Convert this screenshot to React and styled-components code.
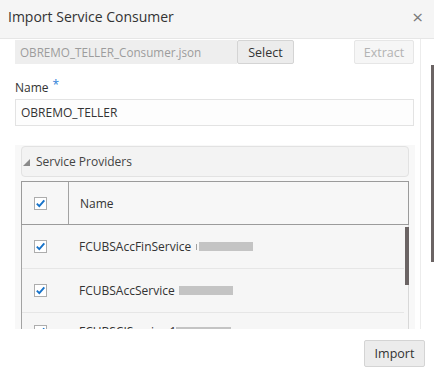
import styled, { createGlobalStyle } from "styled-components";

const GlobalStyle = createGlobalStyle`
  html, body {
    margin: 0;
    padding: 0;
    background: #ffffff;
  }
  body {
    font-family: "Segoe UI", "Open Sans", "Noto Sans", sans-serif;
    color: #333333;
  }
`;

const Dialog = styled.div`
  width: 434px;
  height: 381px;
  display: flex;
  flex-direction: column;
  background: #ffffff;
  overflow: hidden;
`;

const Header = styled.div`
  height: 39px;
  flex-shrink: 0;
  display: flex;
  align-items: flex-start;
  justify-content: space-between;
  padding: 6px 11px 0 8px;
  box-sizing: border-box;
  background: #f5f5f5;
  border-bottom: 1px solid #e6e6e6;
`;

const Title = styled.h1`
  margin: 0;
  font-size: 14px;
  font-weight: 400;
  line-height: 22px;
  color: #333333;
`;

const Close = styled.span`
  font-size: 19px;
  line-height: 22px;
  color: #7a7a7a;
`;

const Body = styled.div`
  height: 290px;
  flex-shrink: 0;
  display: flex;
`;

const Content = styled.div`
  width: 421px;
  box-sizing: border-box;
  padding: 1px 6px 0 15px;
  border-right: 1px solid #ececec;
  overflow: hidden;
`;

const ScrollTrack = styled.div`
  flex: 1;
  display: flex;
  justify-content: flex-end;
  padding-top: 26px;
`;

const Thumb = styled.div`
  width: 3px;
  height: ${(p) => p.$h}px;
  background: #6b6464;
`;

const FileRow = styled.div`
  display: flex;
  height: 24px;
`;

const FileInput = styled.div`
  width: 222px;
  padding-left: 5px;
  box-sizing: border-box;
  background: #eeeeee;
  color: #9c9c9c;
  font-size: 11.7px;
  line-height: 24px;
`;

const Button = styled.button`
  font-family: inherit;
  font-size: 12.5px;
  height: ${(p) => p.$h || 24}px;
  width: ${(p) => p.$w}px;
  padding: 0;
  border-radius: 2px;
  border: 1px solid ${(p) => (p.$disabled ? "#e6e6e6" : "#d4d4d4")};
  background: ${(p) => (p.$disabled ? "#f6f6f6" : "#ececec")};
  color: ${(p) => (p.$disabled ? "#b3b3b3" : "#333333")};
  margin-left: ${(p) => p.$ml || 0}px;
`;

const Label = styled.div`
  margin-top: 15px;
  font-size: 12px;
  line-height: 18px;
  color: #333333;
`;

const Required = styled.span`
  color: #2d7fd8;
  font-size: 12px;
  vertical-align: top;
  margin-left: 4px;
  line-height: 12px;
`;

const TextInput = styled.div`
  margin-top: 2px;
  height: 27px;
  box-sizing: border-box;
  border: 1px solid #e3e3e3;
  background: #fdfdfd;
  padding-left: 5px;
  font-size: 12px;
  line-height: 25px;
  color: #333333;
`;

const Panel = styled.div`
  margin-top: 19px;
  width: 400px;
  background: #f8f8f8;
  padding: 1px 6px 0;
  box-sizing: border-box;
  display: flex;
  flex-direction: column;
  gap: 4px;
`;

const PanelHeader = styled.div`
  height: 31px;
  box-sizing: border-box;
  border: 1px solid #e2e2e2;
  border-radius: 4px;
  background: #f3f3f3;
  display: flex;
  align-items: center;
  padding-left: 1px;
  gap: 6px;
  font-size: 12px;
  color: #444444;
`;

const Triangle = styled.span`
  width: 0;
  height: 0;
  border-left: 7px solid transparent;
  border-bottom: 7px solid #8a8a8a;
  margin-top: 1px;
`;

const Table = styled.div`
  position: relative;
  display: flex;
  flex-direction: column;
`;

const HeadRow = styled.div`
  display: flex;
  height: 44px;
  box-sizing: border-box;
  border: 1px solid #9b9b9b;
  background: #f7f7f7;
`;

const CheckCell = styled.div`
  width: ${(p) => (p.$head ? 47 : 46)}px;
  flex-shrink: 0;
  display: flex;
  align-items: center;
  padding-left: 12px;
  box-sizing: border-box;
  border-right: ${(p) => (p.$head ? "1px solid #a3a3a3" : "none")};
`;

const NameCell = styled.div`
  flex: 1;
  display: flex;
  align-items: center;
  padding-left: 11px;
  font-size: 12px;
  color: #333333;
`;

const Rows = styled.div`
  border-left: 1px solid #a3a3a3;
  border-right: 1px solid #d8d8d8;
  background: #f6f6f6;
`;

const Row = styled.div`
  display: flex;
  height: 44px;
  flex-shrink: 0;
  box-sizing: border-box;
  padding-bottom: ${(p) => p.$lift || 0}px;
  margin-right: 4px;
  border-bottom: 1px solid #e6e6e6;
`;

const Box = styled.span`
  width: 13px;
  height: 13px;
  box-sizing: border-box;
  border: 1px solid #adadad;
  background: #ffffff;
  display: flex;
  align-items: center;
  justify-content: center;
`;

const Redact = styled.span`
  display: inline-block;
  width: ${(p) => p.$w}px;
  height: 9px;
  background: #c4c4c4;
  margin-left: ${(p) => p.$ml}px;
`;

const Tick = styled.span`
  display: inline-block;
  width: 1px;
  height: 6px;
  background: #a0a0a0;
  margin-left: 5px;
`;

const TableThumb = styled.div`
  position: absolute;
  right: 0;
  top: 46px;
  width: 4px;
  height: 58px;
  background: #6b6464;
`;

const Footer = styled.div`
  flex: 1;
  display: flex;
  justify-content: flex-end;
  align-items: flex-start;
  padding: 11px 9px 0 0;
`;

function Check() {
  return (
    <Box>
      <svg width="11" height="11" viewBox="0 0 11 11">
        <path d="M1.8 5.6 L4.3 8.1 L9.3 2.4" fill="none" stroke="#1672c9" strokeWidth="1.9" />
      </svg>
    </Box>
  );
}

const services = [
  { name: "FCUBSAccFinService", tick: true, w: 54, ml: 2 },
  { name: "FCUBSAccService", w: 54, ml: 4 },
  { name: "FCUBSCIService 1", w: 55, ml: 0, lift: 7 },
];

export default function App() {
  return (
    <Dialog>
      <GlobalStyle />
      <Header>
        <Title>Import Service Consumer</Title>
        <Close>×</Close>
      </Header>
      <Body>
        <Content>
          <FileRow>
            <FileInput>OBREMO_TELLER_Consumer.json</FileInput>
            <Button $w={57}>Select</Button>
            <Button $w={60} $ml={60} $disabled>
              Extract
            </Button>
          </FileRow>
          <Label>
            Name<Required>*</Required>
          </Label>
          <TextInput>OBREMO_TELLER</TextInput>
          <Panel>
            <PanelHeader>
              <Triangle />
              Service Providers
            </PanelHeader>
            <Table>
              <HeadRow>
                <CheckCell $head>
                  <Check />
                </CheckCell>
                <NameCell>Name</NameCell>
              </HeadRow>
              <Rows>
                {services.map((s) => (
                  <Row key={s.name} $lift={s.lift}>
                    <CheckCell>
                      <Check />
                    </CheckCell>
                    <NameCell>
                      {s.name}
                      {s.tick && <Tick />}
                      <Redact $w={s.w} $ml={s.ml} />
                    </NameCell>
                  </Row>
                ))}
              </Rows>
              <TableThumb />
            </Table>
          </Panel>
        </Content>
        <ScrollTrack>
          <Thumb $h={197} />
        </ScrollTrack>
      </Body>
      <Footer>
        <Button $w={61} $h={27}>
          Import
        </Button>
      </Footer>
    </Dialog>
  );
}
